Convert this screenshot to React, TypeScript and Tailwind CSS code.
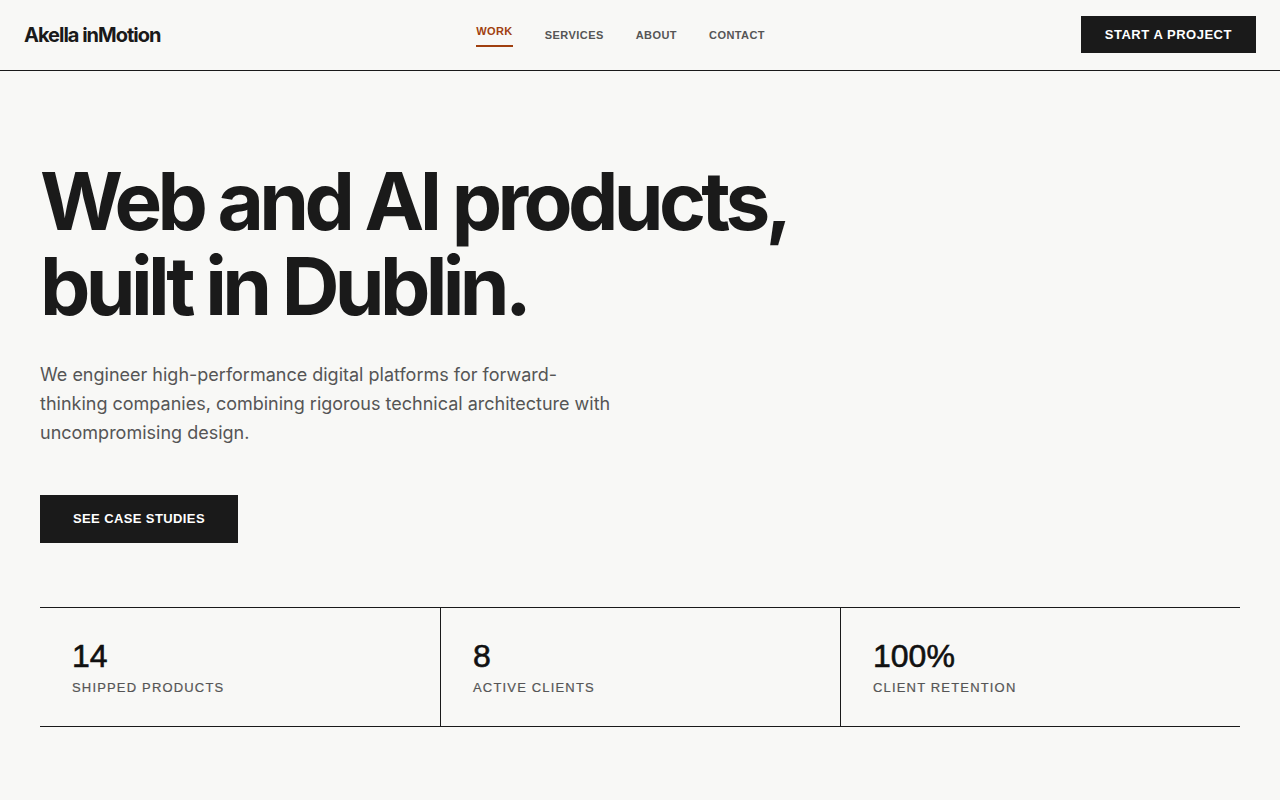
import React from "react";

const grotesk = { fontFamily: '"Liberation Sans", Arial, sans-serif' };

export default function App() {
  const stats = [
    { value: "14", label: "SHIPPED PRODUCTS" },
    { value: "8", label: "ACTIVE CLIENTS" },
    { value: "100%", label: "CLIENT RETENTION" },
  ];
  return (
    <div className="min-h-screen w-full bg-[#f8f8f6] text-[#1a1a1a] font-['Inter',sans-serif]">
      <header className="flex h-[71px] items-center justify-between border-b border-[#1a1a1a] px-6">
        <div className="text-[20px] font-bold tracking-[-0.05em] text-[#1a1a1a]">Akella inMotion</div>
        <nav className="flex items-center gap-8 font-['Liberation_Sans',Arial,sans-serif] text-[11px] font-bold tracking-[0.04em] text-[#555555]">
          <a className="border-b-2 border-[#a0400f] pb-[5px] text-[#a0400f]">WORK</a>
          <a>SERVICES</a>
          <a>ABOUT</a>
          <a>CONTACT</a>
        </nav>
        <button className="mb-[1px] h-[37px] bg-[#1a1a1a] px-6 font-['Liberation_Sans',Arial,sans-serif] text-[13px] font-bold tracking-[0.04em] text-white">
          START A PROJECT
        </button>
      </header>

      <main className="px-10 pt-[87px]">
        <h1 className="text-[80px] font-bold leading-[85px] tracking-[-0.058em] text-[#1a1a1a]">
          Web and AI products,
          <br />
          built in Dublin.
        </h1>
        <p className="mt-8 max-w-[580px] text-[18px] leading-[29px] text-[#555555]">
          We engineer high-performance digital platforms for forward-thinking companies, combining rigorous technical
          architecture with uncompromising design.
        </p>
        <button className="mt-12 h-12 bg-[#1a1a1a] px-[33px] font-['Liberation_Sans',Arial,sans-serif] text-[13px] font-bold tracking-[0.03em] text-white">
          SEE CASE STUDIES
        </button>

        <div className="mt-16 grid grid-cols-3 border-y border-[#1a1a1a]">
          {stats.map((s, i) => (
            <div
              key={s.label}
              className={
                "px-8 pt-8 pb-[28px] " + (i > 0 ? "border-l border-[#1a1a1a]" : "")
              }
              style={grotesk}
            >
              <div className="text-[32px] font-normal leading-8 text-[#111111] [-webkit-text-stroke:0.6px_#111111]">{s.value}</div>
              <div className="mt-[6px] text-[13px] leading-5 tracking-[0.09em] text-[#555555] [-webkit-text-stroke:0.2px_#555555]">{s.label}</div>
            </div>
          ))}
        </div>
      </main>
    </div>
  );
}
